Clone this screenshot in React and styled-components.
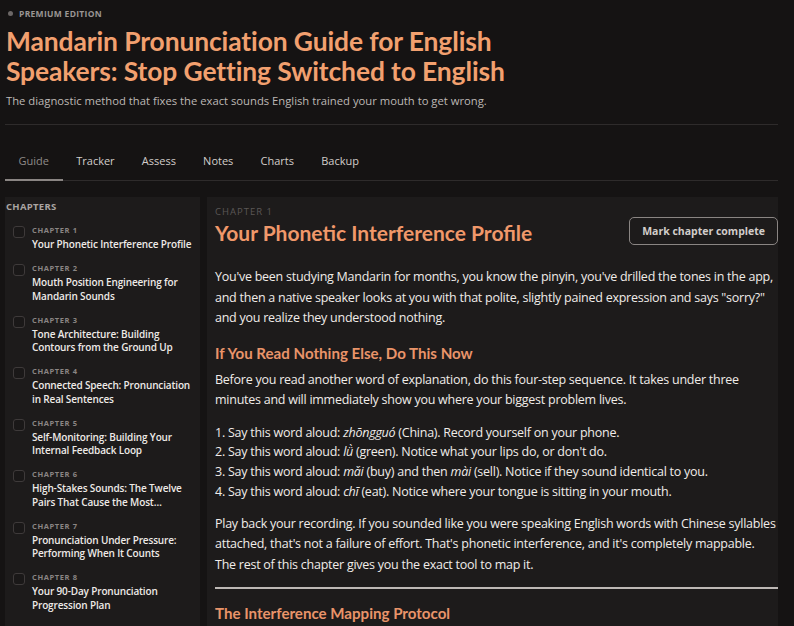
import React from 'react';
import styled, { createGlobalStyle } from 'styled-components';

const GlobalStyle = createGlobalStyle`
    html, body { margin: 0; padding: 0; background: #151313; }
    body { font-family: "Open Sans", "Noto Sans", sans-serif; color: #e8e6e3; overflow: hidden; }
    * { box-sizing: border-box; }
`

const Page = styled.div`
    padding: 6px 16px 0 5px;
    height: 626px; overflow: hidden;
`
const Header = styled.header`
    padding: 0 0 16px 1px;
    border-bottom: 1px solid #2e2b2b;
`
const Eyebrow = styled.div`
    display: flex; align-items: center; gap: 6px;
    font-size: 8.5px; font-weight: 700; letter-spacing: 0.3px; color: #9a9593;
    padding-left: 2px; height: 14px;
    &::before { content: ''; width: 5px; height: 5px; border-radius: 50%; background: #6c6766; }
`
const Title = styled.h1`
    margin: 6px 0 0; font-family: Lato, "Noto Sans", sans-serif;
    font-size: 26.4px; line-height: 30px; font-weight: 700; color: #f2a06f;
    letter-spacing: -0.1px;
`
const Subtitle = styled.p`
    margin: 7px 0 0; font-size: 11.25px; color: #bdb8b5;
`
const Tabs = styled.nav`
    display: flex; margin-top: 19px;
    border-bottom: 1px solid #2e2b2b;
`
const Tab = styled.div`
    padding: 9px 13.6px 11px;
    font-size: 11px; color: ${p => p.$active ? '#8f8b89' : '#d2cdca'};
    border-bottom: 2px solid ${p => p.$active ? '#8a8583' : 'transparent'};
    margin-bottom: -1px;
`
const Layout = styled.div`
    display: grid; grid-template-columns: 195px 1fr; column-gap: 7px;
    margin-top: 16px;
`
const Sidebar = styled.aside`
    background: #1d1b1b; padding: 3px 0 0 1px; height: 430px;
`
const SideHead = styled.div`
    font-size: 9.5px; font-weight: 700; letter-spacing: 0.3px; color: #aaa5a2;
`
const ChapterList = styled.div`
    display: flex; flex-direction: column; gap: 11.5px;
    padding: 12px 0 0 7px;
`
const ChapterItem = styled.div`
    display: flex; gap: 7px;
`
const Check = styled.span`
    flex: none; width: 12px; height: 12px; margin-top: 1px;
    border: 1px solid #3e3a3a; border-radius: 3px; background: #1a1818;
`
const ChapterNum = styled.div`
    font-size: 7.5px; font-weight: 700; letter-spacing: 0.6px; color: #8a8583;
    line-height: 10px;
`
const ChapterName = styled.div`
    font-size: 10px; font-weight: 600; color: #eeeae7; line-height: 13.5px;
    margin-top: 3px; letter-spacing: -0.15px;
`
const Main = styled.main`
    background: #1d1b1b; padding: 9px 0 0 8px; height: 430px;
`
const Kicker = styled.div`
    font-size: 9.5px; letter-spacing: 1px; color: #5b5756; line-height: 12px;
`
const TitleRow = styled.div`
    display: flex; justify-content: space-between; align-items: flex-start;
`
const ChapterTitle = styled.h2`
    margin: 2px 0 0; font-family: Lato, "Noto Sans", sans-serif;
    font-size: 21px; font-weight: 700; color: #f0986a; line-height: 26px;
`
const MarkButton = styled.button`
    margin-top: -1px; height: 28px; padding: 0 12px;
    background: #1d1b1b; border: 1px solid #8a8583; border-radius: 5px;
    font-family: inherit; font-size: 10.5px; font-weight: 700; color: #d2cdca;
`
const Body = styled.div`
    font-size: 12.5px; line-height: 20.5px; color: #f0ece9; letter-spacing: -0.25px;
    p { margin: 0; }
`
const Lead = styled.p`
    padding-top: 21px;
`
const Section = styled.h3`
    margin: 14px 0 7px; font-family: Lato, "Noto Sans", sans-serif;
    font-size: 15.1px; font-weight: 700; color: #e9946a; line-height: 20px; letter-spacing: 0;
`
const Steps = styled.ol`
    margin: 12px 0 12px; padding: 0; list-style: none;
    li { line-height: 19.8px; }
    em { font-style: italic; }
`
const Rule = styled.hr`
    margin: 12px 0 0; border: none; height: 2px; background: #bdb8b5;
`

const chapters = [
    'Your Phonetic Interference Profile',
    'Mouth Position Engineering for Mandarin Sounds',
    'Tone Architecture: Building Contours from the Ground Up',
    'Connected Speech: Pronunciation in Real Sentences',
    'Self-Monitoring: Building Your Internal Feedback Loop',
    'High-Stakes Sounds: The Twelve Pairs That Cause the Most…',
    'Pronunciation Under Pressure: Performing When It Counts',
    'Your 90-Day Pronunciation Progression Plan',
]

const tabs = ['Guide', 'Tracker', 'Assess', 'Notes', 'Charts', 'Backup']

export default function App() {
    return (
        <Page>
            <GlobalStyle />
            <Header>
                <Eyebrow>PREMIUM EDITION</Eyebrow>
                <Title>Mandarin Pronunciation Guide for English<br />Speakers: Stop Getting Switched to English</Title>
                <Subtitle>The diagnostic method that fixes the exact sounds English trained your mouth to get wrong.</Subtitle>
            </Header>
            <Tabs>
                {tabs.map((t, i) => <Tab key={t} $active={i === 0}>{t}</Tab>)}
            </Tabs>
            <Layout>
                <Sidebar>
                    <SideHead>CHAPTERS</SideHead>
                    <ChapterList>
                        {chapters.map((c, i) => (
                            <ChapterItem key={c}>
                                <Check />
                                <div>
                                    <ChapterNum>CHAPTER {i + 1}</ChapterNum>
                                    <ChapterName>{c}</ChapterName>
                                </div>
                            </ChapterItem>
                        ))}
                    </ChapterList>
                </Sidebar>
                <Main>
                    <Kicker>CHAPTER 1</Kicker>
                    <TitleRow>
                        <ChapterTitle>Your Phonetic Interference Profile</ChapterTitle>
                        <MarkButton>Mark chapter complete</MarkButton>
                    </TitleRow>
                    <Body>
                        <Lead>You've been studying Mandarin for months, you know the pinyin, you've drilled the tones in the app, and then a native speaker looks at you with that polite, slightly pained expression and says "sorry?" and you realize they understood nothing.</Lead>
                        <Section>If You Read Nothing Else, Do This Now</Section>
                        <p>Before you read another word of explanation, do this four-step sequence. It takes under three minutes and will immediately show you where your biggest problem lives.</p>
                        <Steps>
                            <li>1. Say this word aloud: <em>zhōngguó</em> (China). Record yourself on your phone.</li>
                            <li>2. Say this word aloud: <em>lǜ</em> (green). Notice what your lips do, or don't do.</li>
                            <li>3. Say this word aloud: <em>mǎi</em> (buy) and then <em>mài</em> (sell). Notice if they sound identical to you.</li>
                            <li>4. Say this word aloud: <em>chī</em> (eat). Notice where your tongue is sitting in your mouth.</li>
                        </Steps>
                        <p>Play back your recording. If you sounded like you were speaking English words with Chinese syllables attached, that's not a failure of effort. That's phonetic interference, and it's completely mappable. The rest of this chapter gives you the exact tool to map it.</p>
                        <Rule />
                        <Section>The Interference Mapping Protocol</Section>
                    </Body>
                </Main>
            </Layout>
        </Page>
    )
}
